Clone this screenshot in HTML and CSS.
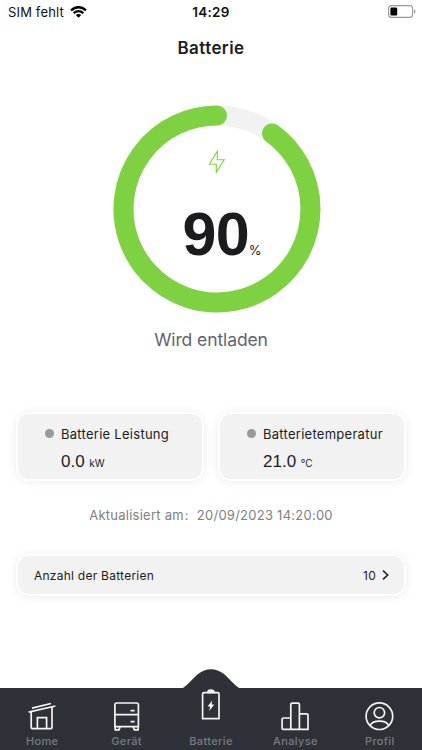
FILE: index.html
```html
<!DOCTYPE html>
<html lang="de">
<head>
    <meta charset="UTF-8">
    <meta name="viewport" content="width=device-width, initial-scale=1.0">
    <title>Batterie</title>
    <link rel="stylesheet" href="styles.css">
</head>
<body>

    <div class="statusBar">
        <div class="carrier">
            <span>SIM fehlt</span>
            <svg class="wifi" width="17" height="12" viewBox="0 0 17 12">
                <path d="M1 4.3 Q8.5 -2 16 4.3" fill="none" stroke="#000" stroke-width="2.4"/>
                <path d="M3.6 7.1 Q8.5 3 13.4 7.1" fill="none" stroke="#000" stroke-width="2.2"/>
                <path d="M5.8 9 Q8.5 7 11.2 9 L8.5 11.8 Z"/>
            </svg>
        </div>
        <div class="clock">14:29</div>
        <svg class="power" width="28" height="13" viewBox="0 0 28 13">
            <rect x="0.6" y="0.6" width="24" height="11.8" rx="3" fill="none" stroke="#999" stroke-width="1.1"/>
            <rect x="2.4" y="2.4" width="6.8" height="8.2" rx="1.3"/>
            <path d="M26 4.4 Q27.4 5 27.4 6.5 Q27.4 8 26 8.6 Z" fill="#999"/>
        </svg>
    </div>

    <h1>Batterie</h1>

    <!-- charge level -->
    <div class="gauge">
        <svg class="ring" width="208" height="208" viewBox="0 0 208 208">
            <circle cx="104" cy="104" r="93.5" fill="none" stroke="#f2f2f2" stroke-width="20"/>
            <path d="M159 28.4 A93.5 93.5 0 1 1 104 10.5" fill="none" stroke="#7ed140" stroke-width="20" stroke-linecap="round"/>
        </svg>
        <div class="level">
            <svg class="bolt" width="18" height="24" viewBox="0 0 18 24">
                <path d="M9.3 1.2 L1.4 14.2 H8.3 V22.4 L16.2 9.7 H9.3 Z" fill="none" stroke="#7ed140" stroke-width="1.1"/>
            </svg>
            <div class="value"><b>90</b><span>%</span></div>
        </div>
    </div>
    <p class="state">Wird entladen</p>

    <div class="cards">
        <div class="card">
            <span class="dot"></span>
            <div>
                <div class="cardName">Batterie Leistung</div>
                <div class="cardValue">0.0 <span>kW</span></div>
            </div>
        </div>
        <div class="card">
            <span class="dot"></span>
            <div>
                <div class="cardName">Batterietemperatur</div>
                <div class="cardValue">21.0 <span>°C</span></div>
            </div>
        </div>
    </div>

    <p class="updated"><span>Aktualisiert am</span><span class="colon">:</span><span>20/09/2023 14:20:00</span></p>

    <div class="countRow">
        <span>Anzahl der Batterien</span>
        <span class="count">10
            <svg width="7" height="10" viewBox="0 0 7 10"><path d="M1 0.7 L5.7 5 L1 9.3" fill="none" stroke="#222" stroke-width="1.6"/></svg>
        </span>
    </div>

    <!-- tab bar -->
    <div class="tabBar">
        <svg class="hump" width="60" height="20" viewBox="0 0 60 20">
            <path d="M0 20 C5 18 11 10 17 5 C25 -1.3 35 -1.3 43 5 C49 10 55 18 60 20 Z" fill="#2f3138"/>
        </svg>
        <div class="tab">
            <svg width="30" height="30" viewBox="0 0 30 30">
                <path d="M4.2 10.2 V25 Q4.2 26.7 5.9 26.7 H23.3 Q25 26.7 25 25 V5.5 M10.4 26.7 V15.6 H19.6 V26.7 M1.6 10.2 L28.4 4 M5 6.1 L24 1.5"/>
            </svg>
            <span>Home</span>
        </div>
        <div class="tab">
            <svg width="30" height="30" viewBox="1.4 0 30 30">
                <path d="M4.3 24.7 V2.8 Q4.3 1 6.1 1 H26 Q27.8 1 27.8 2.8 V24.7 Z M4.3 12.6 H27.8 M19.9 8.6 H24 M19.9 19.6 H24 M4.6 24.5 V27.8 H8.4 L9.4 25 M27.5 24.5 V27.8 H23.7 L22.7 25"/>
            </svg>
            <span>Gerät</span>
        </div>
        <div class="tab active">
            <svg width="20" height="32" viewBox="0 0 20 32">
                <path d="M2.8 3.7 H16.8 Q18 3.7 18 4.9 V29.7 H1.6 V4.9 Q1.6 3.7 2.8 3.7 Z"/>
                <path d="M6.8 3.5 Q6.8 1.2 9.9 1.2 Q13 1.2 13 3.5 Z" fill="#ddd"/>
                <path d="M11.2 11.5 L6.6 17.5 H9.2 L8.2 22 L13.2 15.5 H10.5 Z" fill="#fff" stroke="none"/>
            </svg>
            <span>Batterie</span>
        </div>
        <div class="tab">
            <svg width="30" height="30" viewBox="0 0 30 30">
                <path d="M2.1 27.3 V17.3 Q2.1 16 3.4 16 H10.8 M2.1 27.3 H28 V13.1 Q28 11.8 26.7 11.8 H19.4 M10.8 27.3 V2.4 Q10.8 1.1 12.1 1.1 H18.1 Q19.4 1.1 19.4 2.4 V27.3"/>
            </svg>
            <span>Analyse</span>
        </div>
        <div class="tab">
            <svg width="30" height="30" viewBox="0.6 0 30 30">
                <circle cx="15" cy="14.2" r="13.3"/>
                <circle cx="15" cy="10.7" r="5.2"/>
                <path d="M5.7 23.7 C8 17.5 22 17.5 24.3 23.7"/>
            </svg>
            <span>Profil</span>
        </div>
    </div>

</body>
</html>
```
FILE: styles.css
```css
* {
    box-sizing: border-box;
}

body {
    margin: 0;
    height: 750px;
    display: flex;
    flex-direction: column;
    overflow: hidden;
    background-color: #fff;
    color: #1c1c1e;
    font-family: Inter, "Liberation Sans", sans-serif;
}

.statusBar {
    display: grid;
    grid-template-columns: 1fr auto 1fr;
    align-items: center;
    height: 24px;
    padding: 0 6px 0 8px;
    font-size: 13px;
    letter-spacing: 0.15px;
    color: #111;
}

.carrier {
    display: flex;
    align-items: center;
    gap: 6px;
}

.clock {
    font-weight: 600;
    font-size: 13.5px;
    letter-spacing: 0.3px;
    margin-right: 2px;
}

.power {
    justify-self: end;
    margin-bottom: 1px;
}

h1 {
    margin: 12px 0 0;
    height: 24px;
    line-height: 24px;
    font-size: 17px;
    font-weight: 600;
    letter-spacing: 0.4px;
    text-align: center;
}

/* ring and its content share one cell */
.gauge {
    display: grid;
    width: 208px;
    height: 208px;
    margin: 45px 0 0 112.5px;
}

.ring,
.level {
    grid-area: 1 / 1;
}

.level {
    display: flex;
    flex-direction: column;
    padding-top: 45px;
}

.bolt {
    margin-left: 95px;
}

.value {
    display: flex;
    align-items: baseline;
    margin: 30px 0 0 70px;
    font-family: "Liberation Sans", sans-serif;
    line-height: 60px;
}

.value b {
    font-size: 61px;
    letter-spacing: -0.8px;
}

.value span {
    font-family: Inter, sans-serif;
    font-size: 13px;
}

.state {
    margin: 15px 0 0;
    height: 24px;
    line-height: 24px;
    font-size: 17.5px;
    letter-spacing: -0.1px;
    color: #5f6470;
    text-align: center;
}

.cards {
    display: flex;
    gap: 14px;
    padding: 0 16px;
    margin-top: 60px;
}

.card {
    flex: 1;
    display: flex;
    gap: 7px;
    height: 69px;
    padding: 11px 0 0 27px;
}

.card,
.countRow {
    background-color: #f2f2f2;
    border: 2px solid #fdfdfd;
    border-radius: 13px;
    box-shadow: 0 1px 10px rgba(0, 0, 0, 0.08);
}

.dot {
    width: 9px;
    height: 9px;
    margin-top: 4px;
    border-radius: 50%;
    background-color: #999;
}

.cardName {
    height: 18px;
    line-height: 18px;
    font-size: 13px;
    letter-spacing: 0.27px;
}

.cardValue {
    margin-top: 9px;
    line-height: 20px;
    font-family: "Liberation Sans", sans-serif;
    font-size: 17px;
}

.cardValue span {
    font-family: Inter, sans-serif;
    font-size: 10px;
}

.updated {
    display: flex;
    justify-content: center;
    margin: 24px 0 0;
    height: 20px;
    line-height: 20px;
    font-size: 13px;
    letter-spacing: 0.25px;
    color: #808080;
}

.colon {
    width: 13px;
    padding-left: 1px;
}

.countRow {
    display: flex;
    align-items: center;
    justify-content: space-between;
    height: 42px;
    margin: 29px 16px 0;
    padding: 0 15px 0 16px;
    font-size: 12px;
    letter-spacing: 0.25px;
}

.count {
    display: flex;
    align-items: center;
    gap: 6px;
}

.tabBar {
    position: relative;
    display: grid;
    grid-template-columns: repeat(5, 1fr);
    height: 62px;
    margin-top: auto;
    background-color: #2f3138;
}

/* bump that rises over the bar behind the active tab */
.hump {
    position: absolute;
    left: 181px;
    top: -19px;
}

.tab {
    display: flex;
    flex-direction: column;
    align-items: center;
    justify-content: flex-end;
    padding-bottom: 1px;
    font-size: 11px;
    font-weight: 500;
    letter-spacing: 0.35px;
    color: #777a80;
    z-index: 1;
}

.tab span {
    line-height: 16px;
}

.tab svg {
    flex: none;
    margin-bottom: 1px;
    fill: none;
    stroke: #f4f4f4;
    stroke-width: 1.7;
}

.active svg {
    margin-bottom: 12px;
}
```
